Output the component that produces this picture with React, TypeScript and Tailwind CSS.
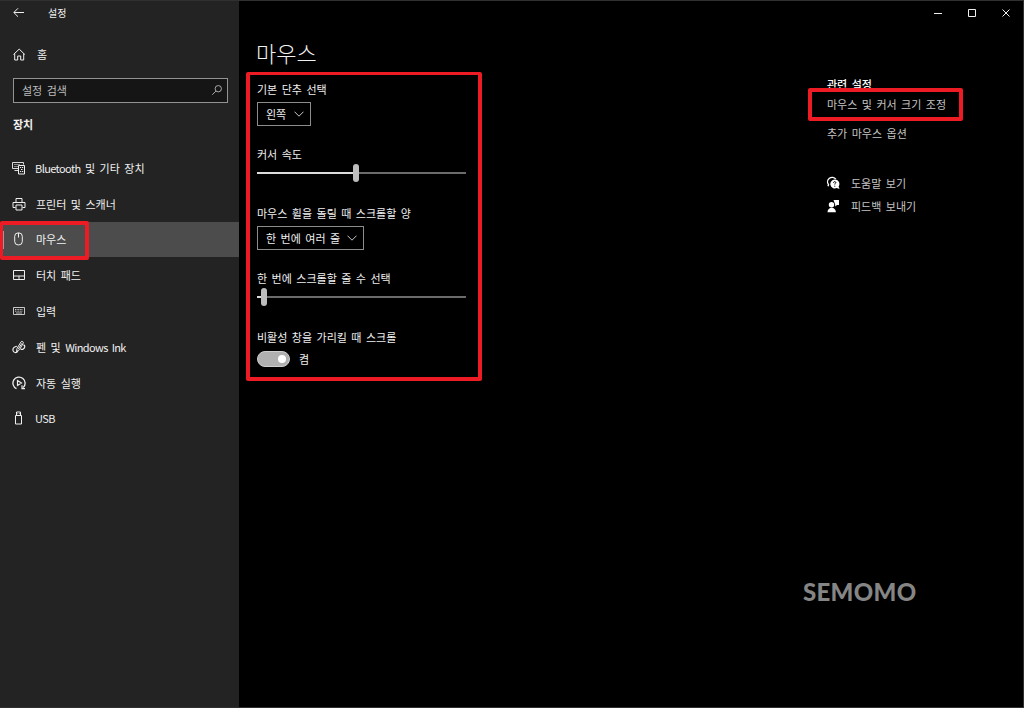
import type { ReactNode } from "react";
import { clsx } from "clsx";

type IconProps = { children: ReactNode; className?: string };

const Icon = ({ children, className }: IconProps) => (
  <svg
    viewBox="0 0 14 14"
    fill="none"
    stroke="currentColor"
    strokeWidth="1"
    className={clsx("shrink-0", className ?? "h-[14px] w-[14px]")}
  >
    {children}
  </svg>
);

const menuItems = [
  {
    latin: "Bluetooth",
    label: " 및 기타 장치",
    icon: (
      <>
        <path d="M6.500 7.500h-6v-6h11v2M2.500 9.500H6" opacity="0.9" />
        <path d="M2 3.500h6M2 5.500h4" opacity="0.5" />
        <path d="M6.500 4.500h6v8.500h-6zM8 6.500h1.200M10 6.500h1.200M9 8.500h1.500M8 10.500h1.200M10 10.500h1.200" />
      </>
    ),
  },
  {
    label: "프린터 및 스캐너",
    icon: (
      <>
        <path d="M4 5V1.500h6V5M3.500 10.500h-2.500v-5h12v5h-2.500" />
        <path d="M4 8h6v5H4z" />
      </>
    ),
  },
  {
    label: "마우스",
    active: true,
    icon: (
      <>
        <rect x="2.700" y="0.900" width="7.600" height="12" rx="3.400" />
        <path d="M6.500 1v4.500" />
      </>
    ),
  },
  {
    label: "터치 패드",
    icon: <path d="M1.500 2.500h11v9h-11zM1.500 8h11M7 8v3.500" />,
  },
  {
    label: "입력",
    icon: (
      <>
        <path d="M1.500 3.500h11v7h-11z" opacity="0.8" />
        <path d="M3 5.500h8M3 7.200h8" strokeDasharray="1 0.6" opacity="0.8" />
        <path d="M4 9h6" opacity="0.7" />
      </>
    ),
  },
  {
    label: "펜 및 ",
    latinEnd: "Windows Ink",
    icon: (
      <>
        <path d="M4.500 11.500 5 8.500 9 1.900c.8-1.300 2.900-.2 2.200 1.300L7.500 9.700z" />
        <path d="M6.300 9 10 3.200" />
        <path
          d="M4.800 6.300C2.800 6.500.7 8 .9 10.300c.3 2.600 3.600 3 5 .9M8.600 9.300c2 .6 4-.8 4.200-2.700.1-.9-.4-1.600-1.400-1.800"
          strokeWidth="1.200"
        />
      </>
    ),
  },
  {
    label: "자동 실행",
    icon: (
      <>
        <path d="M4.500 12.700A6.100 6.100 0 1 1 11.200 11.600" strokeWidth="1.300" />
        <path d="M5.500 4.500v5L9.500 7zM10 9.300v3.400h3" strokeWidth="1.200" />
      </>
    ),
  },
  {
    latin: "USB",
    label: "",
    icon: (
      <>
        <path d="M3.500 4.500h6v8.500h-6zM4.500 4.500v-3.500h4v3.500" />
        <path d="M5.500 2.700h.7M7 2.700h.7" />
      </>
    ),
  },
];

const Chevron = () => (
  <svg viewBox="0 0 10 6" fill="none" stroke="currentColor" className="h-[6px] w-[10px] text-[#c8c8c8]">
    <path d="M.5.700 5 5.200 9.500.700" />
  </svg>
);

const Select = ({ value, className }: { value: string; className: string }) => (
  <button
    className={clsx(
      "flex h-6 items-center justify-between border border-[#8c8c8c] pr-[6px] pl-2 [word-spacing:2px]",
      className
    )}
  >
    <span>{value}</span>
    <Chevron />
  </button>
);

const Slider = ({ value }: { value: number }) => (
  <div className="flex h-[18px] w-[209px] items-center">
    <div className="h-[1.500px] bg-[#dcdcdc]" style={{ width: value }} />
    <div className="h-[18px] w-[6px] rounded-full bg-[#bdbdbd]" />
    <div className="h-[1.500px] flex-1 bg-[#6b6b6b]" />
  </div>
);

const Sidebar = () => (
  <aside className="flex w-[239px] shrink-0 flex-col bg-[#232323]">
    <div className="flex h-6 items-center pl-3 text-[10px]">
      <Icon>
        <path d="M12 6.500H2M6 2.300 1.800 6.500 6 10.700" />
      </Icon>
      <span className="ml-[22px]">설정</span>
    </div>
    <div className="mt-[17px] flex h-6 items-center pl-3">
      <Icon>
        <path d="M1.500 7.500 7.200 2.100 12.800 7.500M2.700 6.500v6.500h3V9h3v4h3V6.500" />
      </Icon>
      <span className="ml-[11px]">홈</span>
    </div>
    <div className="mt-[12px] ml-[13px] flex h-[25px] w-[215px] items-center justify-between border border-[#939393] bg-[#151515] pr-[4px] pb-[2px] pl-2 text-[#bdbdbd]">
      <span>설정 검색</span>
      <Icon className="h-3 w-3">
        <circle cx="8.500" cy="5.500" r="3.700" />
        <path d="M5.800 8.200 1.500 12.500" />
      </Icon>
    </div>
    <h2 className="mt-[13px] pl-[13px] leading-4 font-bold">장치</h2>
    <nav className="mt-[18px]">
      {menuItems.map((item) => (
        <div
          key={item.label}
          className={clsx(
            "relative flex h-[35.800px] items-center pl-3",
            item.active && "bg-[#4c4c4c]"
          )}
        >
          <Icon>{item.icon}</Icon>
          <span className="ml-[10px] whitespace-pre">
            {item.latin && <span className="-ml-px tracking-[-0.600px]">{item.latin}</span>}
            {item.label}
            {item.latinEnd && <span className="tracking-[-0.600px]">{item.latinEnd}</span>}
          </span>
          {item.active && (
            <>
              <div className="absolute top-[9px] left-[3px] h-[18px] w-px bg-[#999]" />
              <div className="absolute top-[-1px] left-0 h-[39px] w-[89px] rounded-[2px] border-4 border-l-[3px] border-[#ed1c24]" />
            </>
          )}
        </div>
      ))}
    </nav>
  </aside>
);

const MouseSettings = () => (
  <section className="h-[309px] w-[236px] rounded-[2px] border-4 border-t-[3px] border-[#ed1c24] pt-[6px] pl-[7px]">
    <p className="leading-4">기본 단추 선택</p>
    <Select value="왼쪽" className="mt-[5px] w-[54px]" />
    <p className="mt-[20px] leading-4">커서 속도</p>
    <div className="mt-[2px]">
      <Slider value={96} />
    </div>
    <p className="mt-[23px] leading-4">마우스 휠을 돌릴 때 스크롤할 양</p>
    <Select value="한 번에 여러 줄" className="mt-[5px] w-[107px]" />
    <p className="mt-[20px] leading-4">한 번에 스크롤할 줄 수 선택</p>
    <div className="mt-[2px]">
      <Slider value={4} />
    </div>
    <p className="mt-[23px] leading-4">비활성 창을 가리킬 때 스크롤</p>
    <div className="mt-[6px] flex items-center gap-[9px]">
      <div className="flex h-4 w-[33px] items-center justify-end rounded-full border border-[#cfcfcf] bg-[#b0b0b0] pr-[3px]">
        <div className="h-2 w-2 rounded-full bg-white" />
      </div>
      <span>켬</span>
    </div>
  </section>
);

const RelatedSettings = () => (
  <section className="w-[180px] pt-[77px] text-[#c4c4c4]">
    <h3 className="leading-4 font-medium text-white">관련 설정</h3>
    <div className="relative mt-[4px] leading-4">
      마우스 및 커서 크기 조정
      <div className="absolute top-[-8px] left-[-19px] h-[33px] w-[155px] rounded-[2px] border-4 border-[#ed1c24]" />
    </div>
    <p className="mt-[13px] leading-4">추가 마우스 옵션</p>
    <div className="mt-[34px] flex h-4 items-center gap-[11px]">
      <Icon className="-ml-px h-[14px] w-[14px] text-white">
        <path d="M2 10.300 2.500 8.700A4.300 4.300 0 1 1 9.800 3.200" strokeWidth="1.400" />
        <path d="M8.800 3.500a4.500 4.500 0 1 0 1.900 8.600l2.800.9-.9-2.500a4.500 4.500 0 0 0-3.800-7z" fill="currentColor" stroke="none" />
        <path d="M7.500 6.700c.2-1.600 2.600-1.300 2.300 0-.2.700-1 .7-1 1.800M8.800 9.700v1" stroke="#000" />
      </Icon>
      <span>도움말 보기</span>
    </div>
    <div className="mt-[7px] flex h-4 items-center gap-[11px]">
      <Icon className="-ml-px h-[14px] w-[14px] text-white">
        <g fill="currentColor" stroke="none">
          <circle cx="5.500" cy="5.700" r="2.700" />
          <path d="M1.500 13.300c0-6 8.400-6 8.400 0zM7.500 1h5.500v5h-2L9.200 7.500V5.500z" />
        </g>
      </Icon>
      <span>피드백 보내기</span>
    </div>
  </section>
);

const WindowControls = () => (
  <div className="flex h-6 items-center justify-end gap-5 pr-[10px]">
    <Icon>
      <path d="M3 7.500h8" />
    </Icon>
    <Icon>
      <path d="M3.500 3.500h7v7h-7z" />
    </Icon>
    <Icon>
      <path d="m3.500 3.500 7 7M10.500 3.500l-7 7" />
    </Icon>
  </div>
);

const App = () => (
  <div className="flex h-[708px] w-[1024px] overflow-hidden border-t border-r border-b border-[#303030] bg-black font-['Noto_Sans_CJK_KR','Noto_Sans',sans-serif] text-[11px] leading-4 [word-spacing:2px] text-[#f0f0f0]">
    <Sidebar />
    <main className="flex min-w-0 flex-1 flex-col">
      <WindowControls />
      <div className="flex">
        <div className="w-[588px] pl-[7px]">
          <h1 className="mt-[12px] mb-[5px] pl-[10px] text-[22px] leading-[30px] font-light">마우스</h1>
          <MouseSettings />
        </div>
        <div className="-mt-[26px]">
          <RelatedSettings />
        </div>
      </div>
      <div className="mt-auto mb-[101px] pl-[564px] font-['Lato','Noto_Sans',sans-serif] text-[24px] leading-[28px] font-black tracking-[0.300px] text-[#858585]">
        SEMOMO
      </div>
    </main>
  </div>
);

export default App;
